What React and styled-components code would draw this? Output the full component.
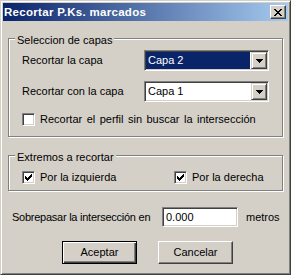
import React from "react";
import styled, { createGlobalStyle, css } from "styled-components";

const Global = createGlobalStyle`
  html, body { margin: 0; padding: 0; background: #d4d0c8; }
  body {
    font-family: "Liberation Sans", Arial, sans-serif;
    font-size: 11px;
    line-height: 13px;
    color: #000;
  }
  * { box-sizing: border-box; }
`;

const Window = styled.div`
  width: 291px;
  height: 275px;
  background: #d4d0c8;
  border: 1px solid;
  border-color: #d4d0c8 #404040 #404040 #d4d0c8;
  box-shadow: inset 1px 1px #fff, inset -1px -1px #808080;
  padding: 2px;
  display: flex;
  flex-direction: column;
`;

const TitleBar = styled.div`
  height: 18px;
  flex: none;
  background: linear-gradient(to right, #0a246a, #a6caf0);
  display: flex;
  align-items: center;
  padding: 0 2px 0 1px;
`;

const Title = styled.span`
  flex: 1;
  color: #fff;
  font-weight: bold;
  font-size: 11.5px;
  letter-spacing: 0.3px;
  line-height: 13px;
  padding-top: 1px;
  white-space: nowrap;
`;

const CaptionButton = styled.div`
  width: 16px;
  height: 14px;
  background: #d4d0c8;
  border: 1px solid;
  border-color: #fff #404040 #404040 #fff;
  box-shadow: inset -1px -1px #808080;
  display: flex;
  align-items: center;
  justify-content: center;
  padding-right: 1px;
`;

const Body = styled.div`
  flex: 1;
  display: flex;
  flex-direction: column;
  padding: 17px 5px 0 5px;
`;

const Group = styled.div`
  position: relative;
  border: 1px solid #808080;
  box-shadow: inset 1px 1px #fff, 1px 1px #fff;
  display: flex;
  flex-direction: column;
  padding: ${(p) => p.$pad};
  margin-top: ${(p) => p.$mt || 0}px;
`;

const Legend = styled.span`
  position: absolute;
  left: 6px;
  top: -5px;
  padding: 0 2px;
  background: #d4d0c8;
  line-height: 13px;
  white-space: nowrap;
`;

const Row = styled.div`
  display: flex;
  align-items: center;
  height: ${(p) => p.$h || 21}px;
  margin-top: ${(p) => p.$mt || 0}px;
`;

const Label = styled.span`
  width: ${(p) => p.$w}px;
  padding-left: ${(p) => p.$pl || 0}px;
  letter-spacing: ${(p) => p.$ls || 0}px;
  flex: none;
  white-space: nowrap;
`;

const sunken = css`
  border: 1px solid;
  border-color: #808080 #fff #fff #808080;
  box-shadow: inset 1px 1px #404040, inset -1px -1px #d4d0c8;
`;

const raised = css`
  border: 1px solid;
  border-color: #d4d0c8 #404040 #404040 #d4d0c8;
  box-shadow: inset 1px 1px #fff, inset -1px -1px #808080;
`;

const Combo = styled.div`
  width: 125px;
  height: 21px;
  flex: none;
  display: flex;
  background: #fff;
  padding: 1px;
  ${sunken};
`;

const ComboField = styled.div`
  flex: 1;
  margin-right: 1px;
  display: flex;
  align-items: center;
  padding-left: 2px;
  background: ${(p) => (p.$selected ? "#0a246a" : "#fff")};
  color: ${(p) => (p.$selected ? "#fff" : "#000")};
`;

const DropButton = styled.div`
  width: 16px;
  height: 17px;
  flex: none;
  background: #d4d0c8;
  display: flex;
  align-items: center;
  justify-content: center;
  padding-top: 1px;
  ${raised};
`;

const CheckItem = styled.label`
  display: flex;
  align-items: center;
  gap: 5px;
  height: 13px;
  width: ${(p) => (p.$w ? `${p.$w}px` : "auto")};
  flex: none;
  white-space: nowrap;
`;

const CheckBox = styled.span`
  width: 13px;
  height: 13px;
  flex: none;
  background: #fff;
  display: flex;
  align-items: center;
  justify-content: center;
  ${sunken};
`;

const CheckText = styled.span`
  word-spacing: ${(p) => p.$ws || 0}px;
`;

const TextInput = styled.div`
  width: 76px;
  height: 20px;
  flex: none;
  background: #fff;
  display: flex;
  align-items: center;
  padding-left: 3px;
  ${sunken};
`;

const Unit = styled.span`
  margin-left: 8px;
`;

const ButtonRow = styled.div`
  display: flex;
  gap: 21px;
  margin-top: 14px;
  padding-left: 54px;
`;

const Button = styled.button`
  width: 75px;
  height: 23px;
  padding: 0;
  font: inherit;
  color: #000;
  background: #d4d0c8;
  border: 1px solid;
  border-color: #fff #404040 #404040 #fff;
  box-shadow: inset -1px -1px #808080;
  ${(p) =>
    p.$default &&
    css`
      border-color: #000;
      box-shadow: inset 1px 1px #fff, inset -1px -1px #404040,
        inset -2px -2px #808080;
    `}
`;

const Pixels = ({ rows, w, h }) => (
  <svg width={w} height={h} viewBox={`0 0 ${w} ${h}`} shapeRendering="crispEdges" style={{ display: "block" }}>
    {rows.flatMap((r, y) =>
      r.split("").map((c, x) => (c === "X" ? <rect key={`${x}-${y}`} x={x} y={y} width="1" height="1" fill="#000" /> : null))
    )}
  </svg>
);

const CloseGlyph = () => (
  <Pixels
    w={8}
    h={7}
    rows={["XX....XX", ".XX..XX.", "..XXXX..", "...XX...", "..XXXX..", ".XX..XX.", "XX....XX"]}
  />
);

const Arrow = () => <Pixels w={7} h={4} rows={["XXXXXXX", ".XXXXX.", "..XXX..", "...X..."]} />;

const Check = () => (
  <Pixels
    w={7}
    h={7}
    rows={["......X", ".....XX", "X...XXX", "XX.XXX.", "XXXXX..", ".XXX...", "..X...."]}
  />
);

const Checkbox = ({ checked, children, width, ws }) => (
  <CheckItem $w={width}>
    <CheckBox>{checked && <Check />}</CheckBox>
    <CheckText $ws={ws}>{children}</CheckText>
  </CheckItem>
);

const ComboBox = ({ value, selected }) => (
  <Combo>
    <ComboField $selected={selected}>{value}</ComboField>
    <DropButton>
      <Arrow />
    </DropButton>
  </Combo>
);

export default function App() {
  return (
    <>
      <Global />
      <Window>
        <TitleBar>
          <Title>Recortar P.Ks. marcados</Title>
          <CaptionButton>
            <CloseGlyph />
          </CaptionButton>
        </TitleBar>
        <Body>
          <Group $pad="11px 0 10px 13px">
            <Legend>Seleccion de capas</Legend>
            <Row>
              <Label $w={122}>Recortar la capa</Label>
              <ComboBox value="Capa 2" selected />
            </Row>
            <Row $mt={10}>
              <Label $w={122}>Recortar con la capa</Label>
              <ComboBox value="Capa 1" />
            </Row>
            <Row $h={13} $mt={11}>
              <Checkbox ws={1.4}>Recortar el perfil sin buscar la intersección</Checkbox>
            </Row>
          </Group>
          <Group $pad="15px 0 6px 13px" $mt={18}>
            <Legend>Extremos a recortar</Legend>
            <Row $h={13}>
              <Checkbox checked width={152}>
                Por la izquierda
              </Checkbox>
              <Checkbox checked>Por la derecha</Checkbox>
            </Row>
          </Group>
          <Row $h={20} $mt={16}>
            <Label $w={154} $pl={4} $ls={-0.25}>
              Sobrepasar la intersección en
            </Label>
            <TextInput>0.000</TextInput>
            <Unit>metros</Unit>
          </Row>
          <ButtonRow>
            <Button $default>Aceptar</Button>
            <Button>Cancelar</Button>
          </ButtonRow>
        </Body>
      </Window>
    </>
  );
}
